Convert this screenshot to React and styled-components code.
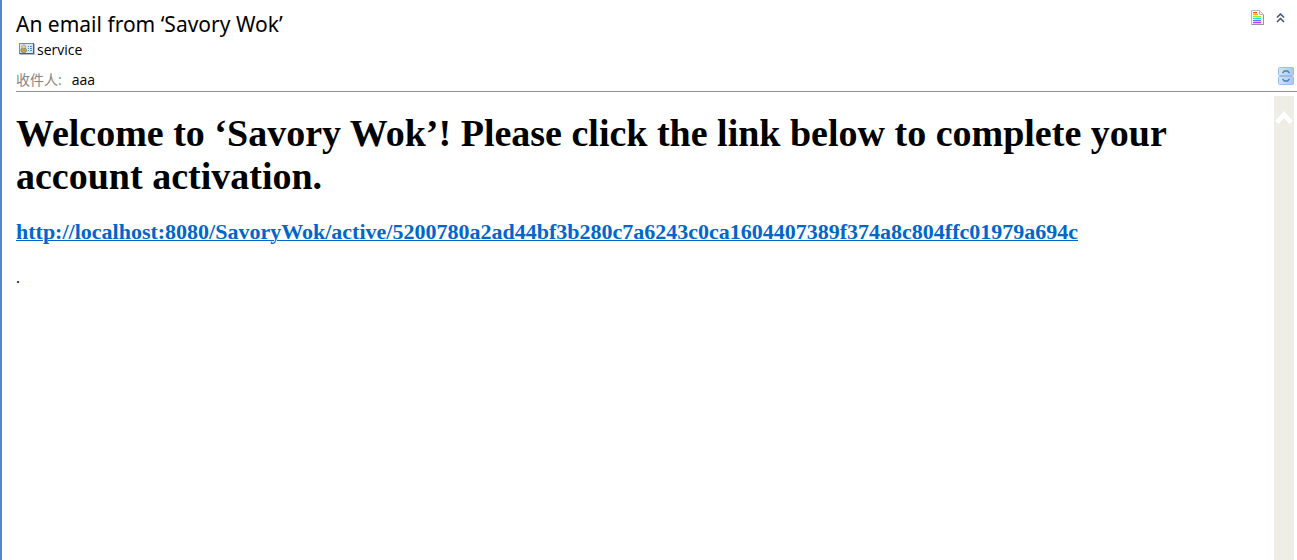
import React from "react";
import styled, { createGlobalStyle } from "styled-components";

const GlobalStyle = createGlobalStyle`
  * { box-sizing: border-box; }
  body { margin: 0; background: #fff; }
`;

const MailPane = styled.main`
  display: flex;
  flex-direction: column;
  min-height: 100vh;
  border-left: 2px solid #5b84c4;
  color: #000;
  font-family: "Noto Sans", "Noto Sans CJK SC", sans-serif;
`;

const Header = styled.header`
  display: flex;
  flex-direction: column;
  margin-left: 14px;
  padding-top: 8px;
  border-bottom: 1px solid #949494;
`;

const HeaderRow = styled.div`
  display: flex;
  align-items: ${(p) => p.$align || "center"};
  justify-content: space-between;
  height: ${(p) => p.$height}px;
  padding-right: ${(p) => p.$end || 0}px;
`;

const Subject = styled.h2`
  margin: 0;
  font-size: 21px;
  line-height: 32px;
  font-weight: 400;
`;

const Sender = styled.div`
  display: flex;
  align-items: center;
  gap: 2px;
  padding-left: 3px;
  font-family: "Open Sans", sans-serif;
  font-size: 14px;
  line-height: 20px;
`;

const Recipient = styled.dl`
  display: flex;
  align-items: center;
  gap: 10px;
  margin: 0;
  font-family: "Open Sans", "Noto Sans CJK SC", sans-serif;
  font-size: 14px;
  line-height: 22px;

  dt { color: #858585; }
  dd { margin: 0; }
`;

const Tools = styled.div`
  display: flex;
  align-items: center;
  gap: 12px;
  height: 20px;
`;

const IconButton = styled.button`
  display: flex;
  padding: 0;
  border: 0;
  background: none;

  svg { display: block; }
`;

const ExpandButton = styled(IconButton)`
  padding-bottom: 6px;
`;

const Body = styled.div`
  display: flex;
  flex: 1;
  padding: 4px 3px 0 14px;
`;

const Message = styled.article`
  flex: 1;
  min-width: 0;
  padding-top: 16px;
  font-family: "Liberation Serif", serif;
`;

const Welcome = styled.h1`
  margin: 0 0 20px;
  font-size: 38px;
  line-height: 43px;
  font-weight: 700;
`;

const Activation = styled.h3`
  margin: 0 0 20px;
  font-size: 22px;
  line-height: 28px;
  font-weight: 700;
  overflow-wrap: anywhere;

  a { color: #0066cc; text-decoration-thickness: 1px; }
`;

const Closing = styled.p`
  margin: 0;
  font-size: 16px;
  line-height: 24px;
`;

const ScrollTrack = styled.div`
  display: flex;
  flex-direction: column;
  width: 20px;
  padding-top: 12px;
  background: #eeeee6;
`;

const noteLines = [
  { color: "#ff4800", width: 4 },
  { color: "#ffb000", width: 5 },
  { color: "#a0f020", width: 8 },
  { color: "#10e8f0", width: 8 },
  { color: "#5c70ff", width: 8 },
  { color: "#c830f0", width: 8 },
];

function NoteIcon() {
  return (
    <svg width="13" height="16" viewBox="0 0 13 16">
      <path d="M.5 .5H8.5L12.5 4.5V14.5H.5Z" fill="#fff" stroke="#b4b4c0" />
      <path d="M8.5 1V4.5H12" fill="#eee" stroke="#b4b4c0" />
      <path d="M12.5 5V14.5H1" fill="none" stroke="#9494a0" />
      {noteLines.map(({ color, width }, i) => (
        <g key={color} fill={color}>
          <rect x="2" y={2 + i * 2} width={width} height="2" opacity=".3" />
          <rect x="2" y={2 + i * 2} width={width} height="1" />
        </g>
      ))}
    </svg>
  );
}

function CollapseIcon() {
  return (
    <svg width="9" height="10" viewBox="0 0 9 10" fill="none" stroke="#3c557d" strokeWidth="1.5">
      <path d="M1 4.5 4.5 1 8 4.5M1 9 4.5 5.5 8 9" />
    </svg>
  );
}

function ExpandIcon() {
  return (
    <svg width="16" height="18" viewBox="0 0 16 18">
      <defs>
        <linearGradient id="tile" x1="0" x2="1">
          <stop stopColor="#d4e6fa" />
          <stop offset="1" stopColor="#a9c8ee" />
        </linearGradient>
      </defs>
      <rect x=".5" y=".5" width="15" height="8" rx="1" fill="url(#tile)" stroke="#9bbce6" />
      <rect x=".5" y="9.5" width="15" height="8" rx="1" fill="url(#tile)" stroke="#9bbce6" />
      <path d="M4.5 6 6.5 4H9.5L11.5 6M4.5 12 6.5 14H9.5L11.5 12" fill="none" stroke="#4a7fae" strokeWidth="1.3" />
    </svg>
  );
}

function ContactIcon() {
  return (
    <svg width="16" height="14" viewBox="0 0 16 14">
      <path d="M1 11.5H15.5V1" fill="none" stroke="#b8bcc4" />
      <rect x=".5" y=".5" width="14" height="10" fill="#d5e9fc" stroke="#5b91c9" />
      <path d="M.5 10.5H14.5V.5" fill="none" stroke="#2d609c" />
      <ellipse cx="4.7" cy="7.3" rx="2.9" ry="2.3" fill="#c7a43c" stroke="#7d6b34" strokeWidth=".6" />
      <circle cx="4.7" cy="3.8" r="1.9" fill="#f0d892" stroke="#8d7842" strokeWidth=".6" />
      <path d="M9 3.5H10M11 3.5H13M9 5.5H10M11 5.5H13M9 7.5H10M11 7.5H13" stroke="#5a88b8" />
    </svg>
  );
}

function ScrollUpIcon() {
  return (
    <svg width="20" height="20" viewBox="0 0 20 20" fill="none" stroke="#fff" strokeWidth="4.5">
      <path d="M3 14.5 10 6.5 17 14.5" />
    </svg>
  );
}

const activationUrl =
  "http://localhost:8080/SavoryWok/active/5200780a2ad44bf3b280c7a6243c0ca1604407389f374a8c804ffc01979a694c";

export default function App() {
  return (
    <>
      <GlobalStyle />
      <MailPane>
        <Header>
          <HeaderRow $height={32} $end={12} $align="flex-start">
            <Subject>An email from ‘Savory Wok’</Subject>
            <Tools>
              <IconButton type="button" aria-label="Message notes"><NoteIcon /></IconButton>
              <IconButton type="button" aria-label="Collapse header"><CollapseIcon /></IconButton>
            </Tools>
          </HeaderRow>
          <HeaderRow $height={20}>
            <Sender><ContactIcon />service</Sender>
          </HeaderRow>
          <HeaderRow $height={31} $end={3} $align="flex-end">
            <Recipient>
              <dt>收件人:</dt>
              <dd>aaa</dd>
            </Recipient>
            <ExpandButton type="button" aria-label="Expand recipients"><ExpandIcon /></ExpandButton>
          </HeaderRow>
        </Header>
        <Body>
          <Message>
            <Welcome>
              Welcome to ‘Savory Wok’! Please click the link below to complete your account activation.
            </Welcome>
            <Activation><a href={activationUrl}>{activationUrl}</a></Activation>
            <Closing>.</Closing>
          </Message>
          <ScrollTrack>
            <IconButton type="button" aria-label="Scroll up"><ScrollUpIcon /></IconButton>
          </ScrollTrack>
        </Body>
      </MailPane>
    </>
  );
}
